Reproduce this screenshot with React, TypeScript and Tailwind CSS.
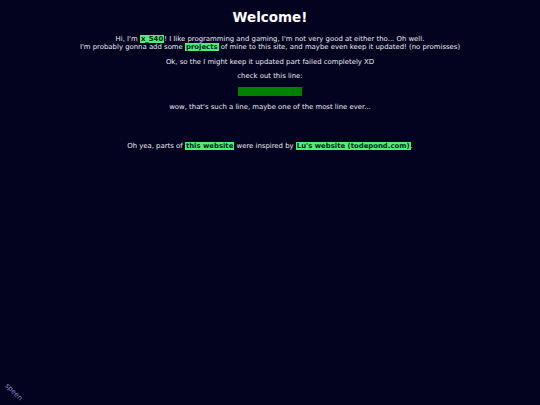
import React from 'react';

const Hl = ({ children }: { children: React.ReactNode }) => (
  <span className="bg-[#4dee7a] text-[#06221a] font-bold px-[1px]">{children}</span>
);

const App: React.FC = () => {
  return (
    <div className="relative min-h-[405px] w-full bg-[#03021f] text-[#ececf2] font-['DejaVu_Sans',Verdana,sans-serif] overflow-hidden">
      <main className="flex flex-col items-center text-center pt-[8px] text-[6.9px] leading-[8px]">
        <h1 className="text-[13.5px] font-bold text-white leading-[18px]">Welcome!</h1>

        <div className="mt-[9px]">
          <p>
            Hi, I'm <Hl>x_540</Hl>! I like programming and gaming, I'm not very good at either tho... Oh well.
          </p>
          <p>
            I'm probably gonna add some <Hl>projects</Hl> of mine to this site, and maybe even keep it updated! (no promisses)
          </p>
        </div>

        <p className="mt-[7px]">Ok, so the I might keep it updated part failed completely XD</p>

        <p className="mt-[6px]">check out this line:</p>

        <div className="mt-[7px] w-[64px] h-[9px] bg-[#008000]"></div>

        <p className="mt-[7px]">wow, that's such a line, maybe one of the most line ever...</p>

        <p className="mt-[31px]">
          Oh yea, parts of <Hl>this website</Hl> were inspired by <Hl>Lu's website (todepond.com)</Hl>.
        </p>
      </main>

      <span className="absolute left-[3px] bottom-[8px] rotate-45 origin-center text-[7px] text-[#8a8ac8]">speen</span>
    </div>
  );
};

export default App;
